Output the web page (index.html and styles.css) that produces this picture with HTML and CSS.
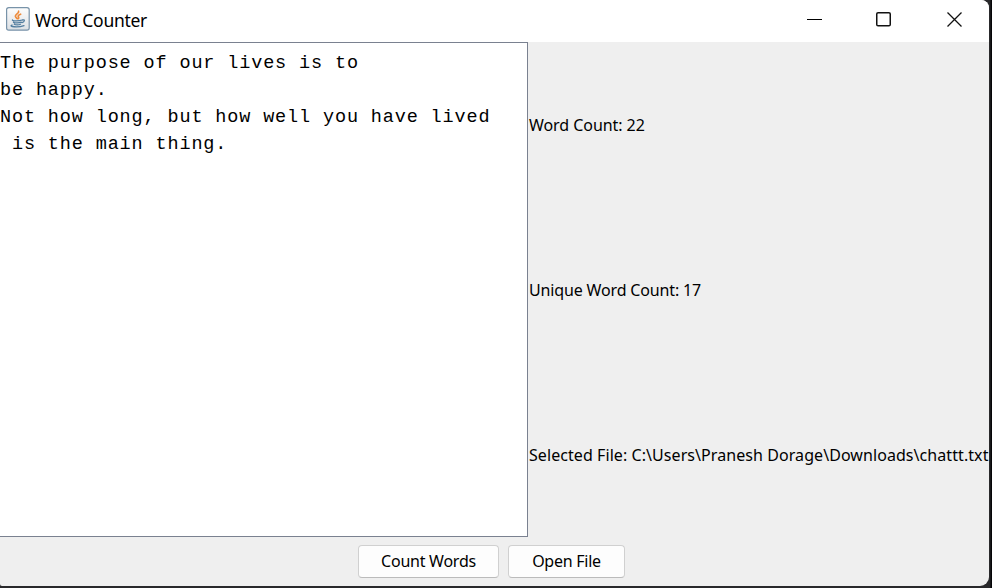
FILE: index.html
```html
<!DOCTYPE html>
<html lang="en">
<head>
<meta charset="utf-8">
<title>Word Counter</title>
<link rel="stylesheet" href="styles.css">
</head>
<body>
<div class="window">
  <header class="titlebar">
    <svg class="app-icon" width="24" height="24" viewBox="0 0 24 24">
      <defs><linearGradient id="tile" x1="0" y1="0" x2="0" y2="1"><stop offset="0" stop-color="#fdfdfd"/><stop offset="1" stop-color="#dce0e4"/></linearGradient></defs>
      <rect x=".6" y=".6" width="22.6" height="22.6" rx="2.2" fill="url(#tile)" stroke="#7893a9" stroke-width="1.2"/>
      <g fill="none" stroke-linecap="round">
        <path d="M12.6 4.2c.8 2-3.700 3.300-3.200 5.200.2 1 1.300 1.700 1.800 2.300M14.600 7.200c-2 .8-3 1.700-2.100 2.900.5.700.3 1.100-.2 1.600" stroke="#ed8b3c" stroke-width="1.7"/>
        <path d="M6.500 13c-1 .9 6.500 1.200 9.500 0M7.500 15.200c1 .9 6 .9 7.800 0M8.300 17.200c1.300.8 4.700.8 6.200 0M16.200 13c3.200-.9 2.500 2-.2 2.700M6 18c-4 1.700 6 2.800 12 .6" stroke="#527d9f" stroke-width="1.3"/>
      </g>
    </svg>
    <h1 class="title">Word Counter</h1>
    <div class="controls">
      <svg width="15" height="16" viewBox="0 0 15 16"><path d="M0 8.500h15" stroke="#000"/></svg>
      <svg width="16" height="16" viewBox="0 0 16 16"><rect x=".75" y="1.750" width="13.500" height="13" rx="1.300" fill="none" stroke="#111" stroke-width="1.500"/></svg>
      <svg width="16" height="16" viewBox="0 0 16 16"><path d="M.5 1.500l14 14M14.500 1.500l-14 14" stroke="#111" stroke-width="1.300"/></svg>
    </div>
  </header>
  <main class="content">
    <pre class="editor">The purpose of our lives is to
be happy.
Not how long, but how well you have lived
 is the main thing.</pre>
    <section class="stats">
      <p><span class="words">Word Count: 22</span></p>
      <p><span class="unique">Unique Word Count: 17</span></p>
      <p><span class="file">Selected File: C:\Users\Pranesh Dorage\Downloads\chattt.txt</span></p>
    </section>
  </main>
  <footer class="actions">
    <button class="button count">Count Words</button>
    <button class="button open">Open File</button>
  </footer>
</div>
</body>
</html>
```
FILE: styles.css
```css
* { box-sizing: border-box; }
body {
  margin: 0;
  width: 992px;
  height: 588px;
  overflow: hidden;
  background: linear-gradient(90deg, #29292b 0 990px, #050507 991px);
  color: #000;
  font-family: "Noto Sans", sans-serif;
}
.window {
  display: flex;
  flex-direction: column;
  width: 989px;
  height: 586px;
  overflow: hidden;
  background: #efefef;
  border-radius: 0 8px 9px 2px;
}
.titlebar {
  display: flex;
  align-items: center;
  flex: 0 0 42px;
  padding: 0 26px 4px 6px;
  background: #fff;
}
.app-icon { flex: none; }
.title {
  margin: 0 0 0 5px;
  padding-top: 2px;
  font-size: 17.500px;
  font-weight: 400;
  line-height: 24px;
  letter-spacing: -0.280px;
  white-space: nowrap;
}
.controls { display: flex; gap: 54px; margin-left: auto; }
.controls svg { display: block; }
.controls svg:last-child { margin-left: 1px; }
.content { display: flex; flex: 0 0 495px; }
.editor {
  flex: 0 0 528px;
  margin: 0;
  padding: 7px 0 0;
  background: #fff;
  border: 1px solid #7a8190;
  border-left: 0;
  font: 18.500px/27px "Liberation Mono", monospace;
  letter-spacing: 0.860px;
}
.stats {
  display: grid;
  grid-template-rows: repeat(3, 165px);
  flex: 1;
  min-width: 0;
  padding-left: 1px;
}
.stats p {
  display: flex;
  align-items: center;
  margin: 0;
  font-size: 16px;
  white-space: nowrap;
}
.words { letter-spacing: -0.060px; }
.unique { letter-spacing: -0.150px; }
.file { letter-spacing: 0.070px; }
.actions {
  display: flex;
  justify-content: center;
  gap: 9px;
  padding: 8px 6px 0 0;
}
.button {
  height: 33px;
  padding: 0 0 2px;
  background: #fdfdfd;
  border: 1px solid #d0d0d0;
  border-bottom-color: #bbb;
  border-radius: 4px;
  color: #000;
  font: 16px/24px "Noto Sans", sans-serif;
  letter-spacing: -0.250px;
}
.count { width: 141px; }
.open { width: 117px; }
```
